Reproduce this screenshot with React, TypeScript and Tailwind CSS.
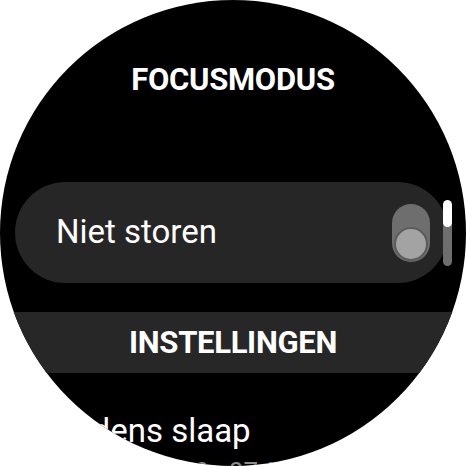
import React from "react";

const heading = "font-['Roboto',sans-serif] font-bold text-white text-[31px] leading-[36px] tracking-[-0.3px]";
const body = "font-['Roboto',sans-serif] text-white text-[33px] leading-[38px]";

/** Rounded scroll indicator sitting on the right edge of the watch face */
const ScrollIndicator: React.FC = () => (
  <div className="absolute left-[443px] top-[200px] w-[9px] h-[66px] rounded-full bg-[#6e6e6e] overflow-hidden">
    <div className="h-[27px] w-full rounded-full bg-white" />
  </div>
);

const Toggle: React.FC = () => (
  <div className="w-[38px] h-[58px] shrink-0 rounded-full bg-[#6e6e6e] flex flex-col justify-end items-center pb-[1px]">
    <div className="w-[34px] h-[34px] rounded-full bg-[#5c5c5c] flex items-center justify-center">
      <div className="w-[30px] h-[30px] rounded-full bg-[#a3a3a3]" />
    </div>
  </div>
);

export default function App() {
  return (
    <div className="w-[466px] h-[466px] bg-white">
      <div className="relative w-[466px] h-[466px] rounded-full bg-black overflow-hidden flex flex-col">
        {/* Title */}
        <div className={`${heading} shrink-0 text-center mt-[62px]`}>FOCUSMODUS</div>

        {/* Do not disturb card */}
        <div className="shrink-0 mt-[84px] ml-[15px] w-[433px] h-[101px] rounded-full bg-[#262626] flex items-center justify-between pl-[41px] pr-[18px]">
          <span className={`${body} pb-[1px]`}>Niet storen</span>
          <Toggle />
        </div>

        {/* Section header */}
        <div className="shrink-0 mt-[29px] h-[61px] bg-[#272727] flex items-center justify-center">
          <span className={heading}>INSTELLINGEN</span>
        </div>

        {/* List item */}
        <div className="shrink-0 mt-[39px] pl-[56px] flex flex-col">
          <span className={body}>Tijdens slaap</span>
          <span className="font-['Roboto',sans-serif] text-[#8c8c8c] text-[26px] leading-[32px] mt-[6px] pl-[88px]">22:00 - 07:00</span>
        </div>

        <ScrollIndicator />
      </div>
    </div>
  );
}
